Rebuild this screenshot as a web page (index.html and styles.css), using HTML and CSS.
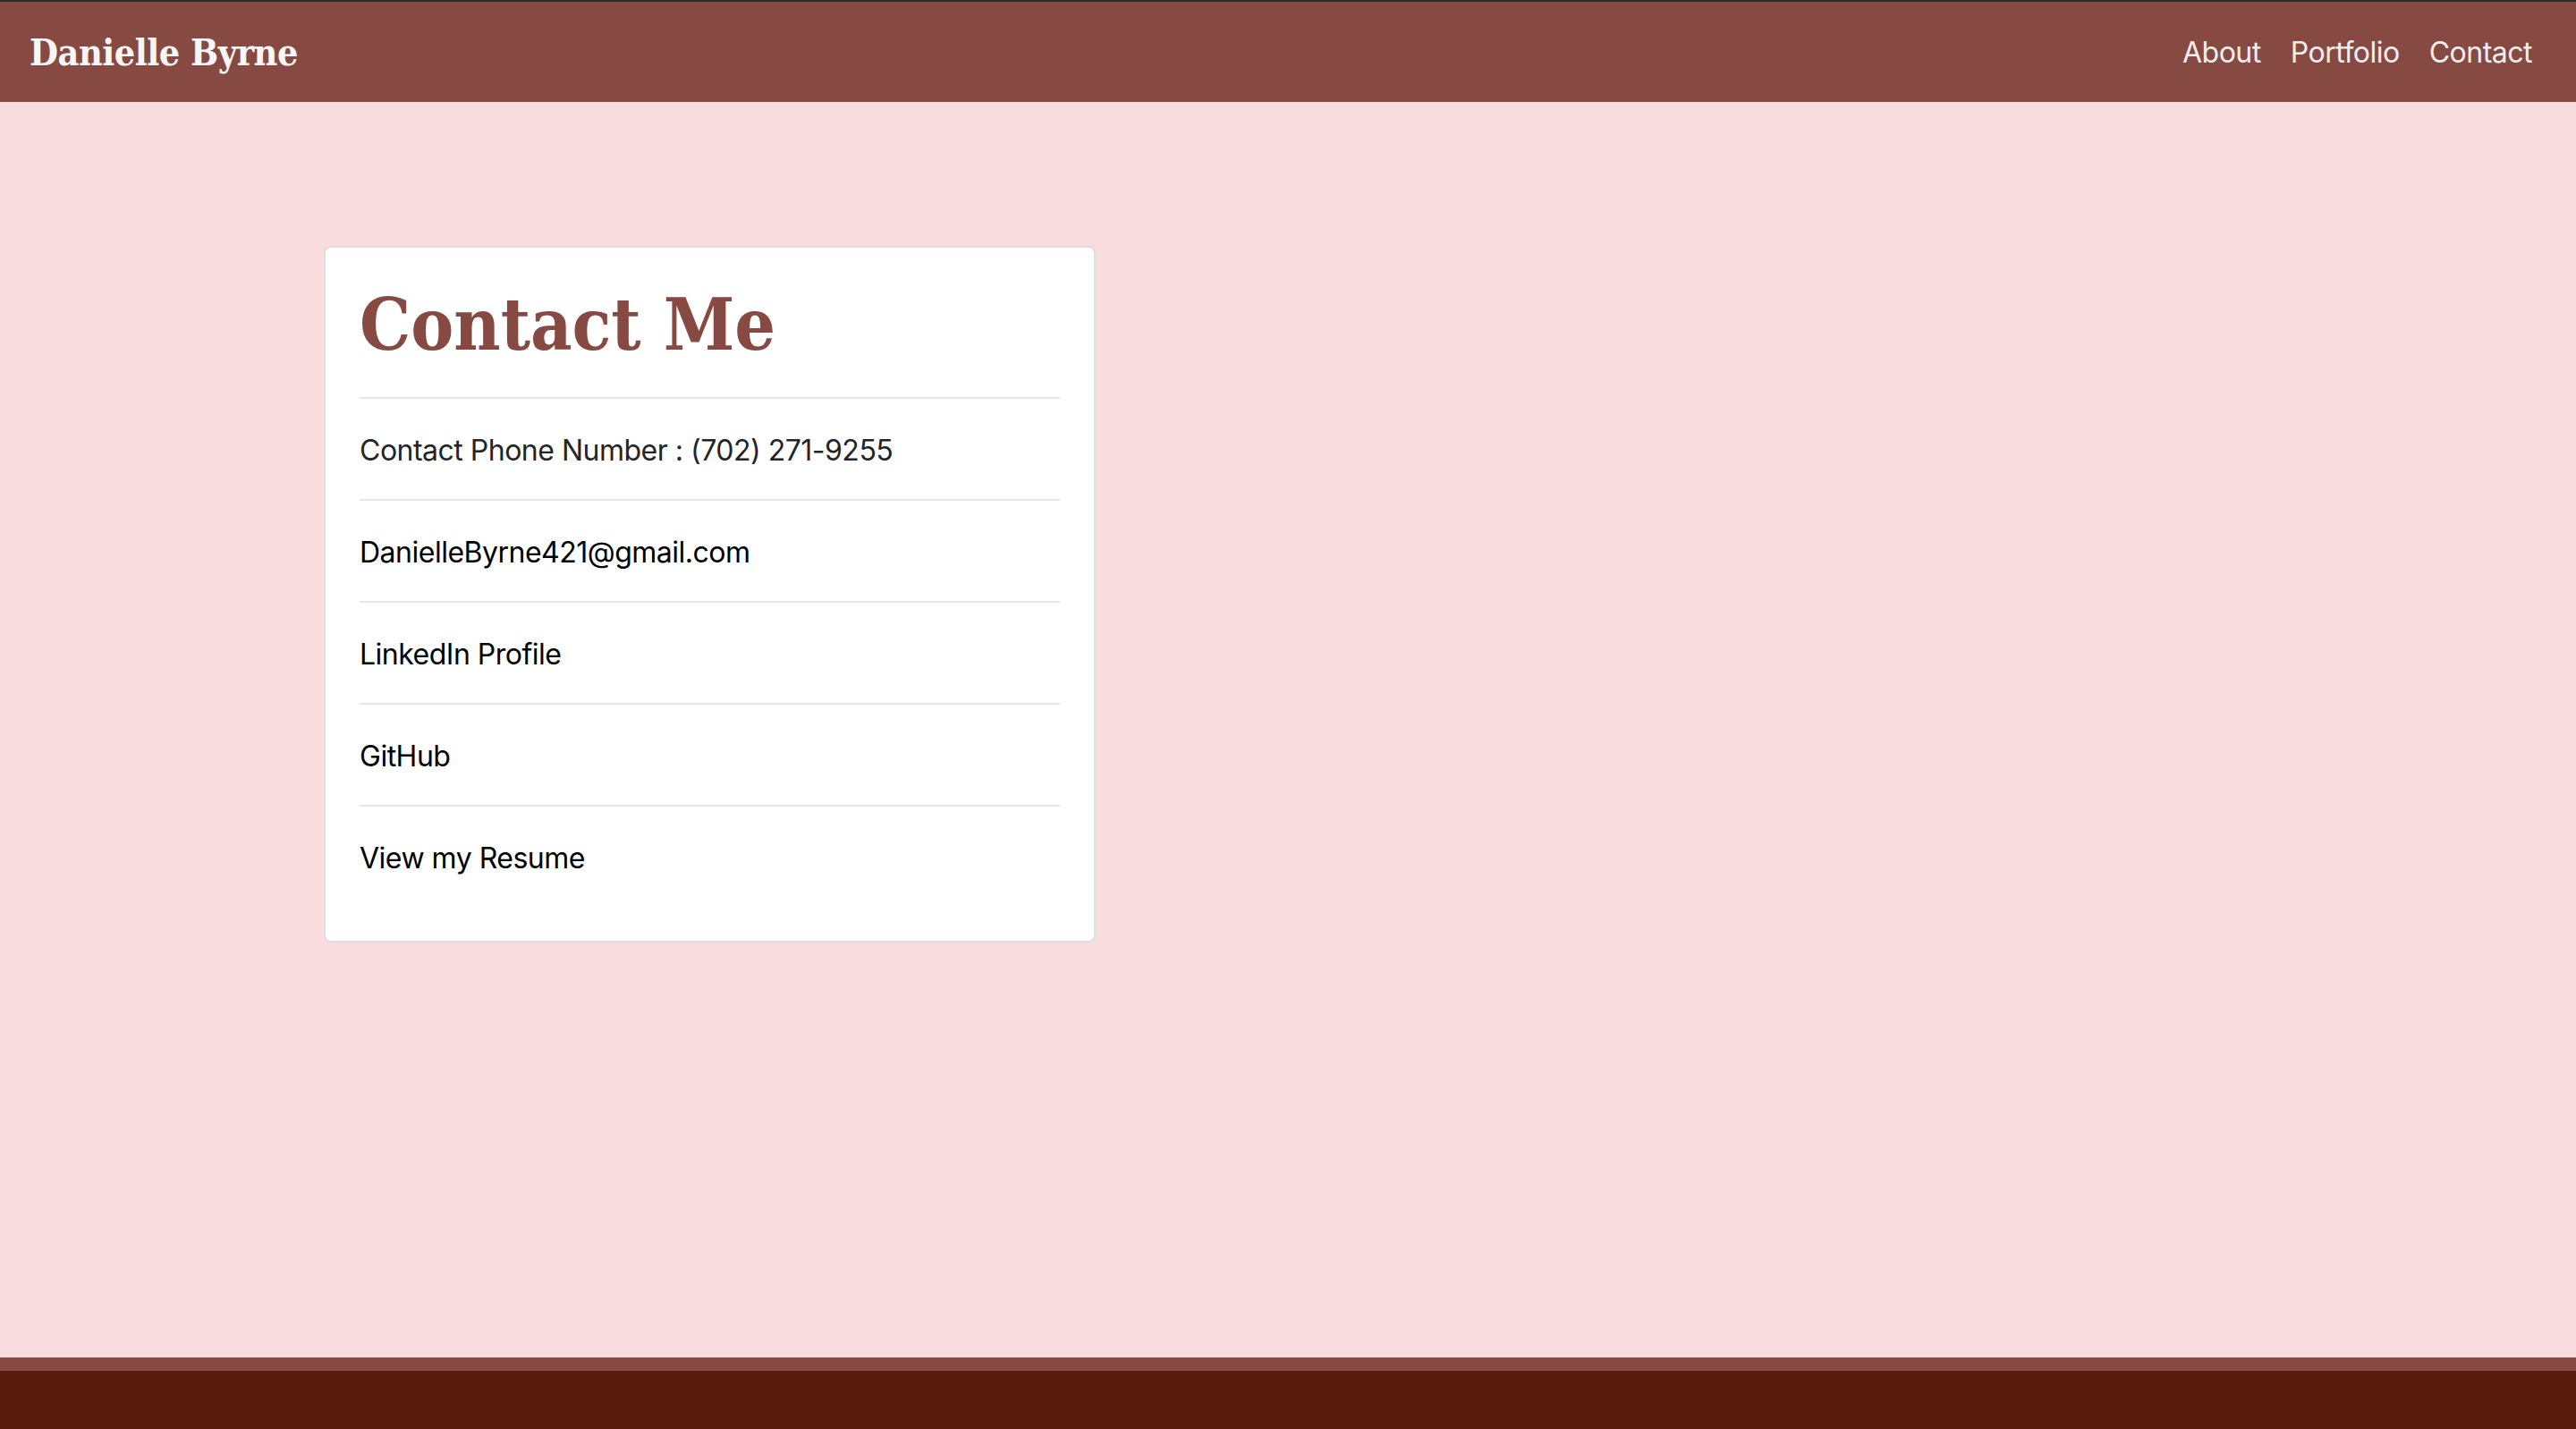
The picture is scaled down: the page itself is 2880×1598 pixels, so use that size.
FILE: index.html
```html
<!DOCTYPE html>
<html lang="en">
<head>
<meta charset="utf-8">
<title>Danielle Byrne - Contact</title>
<link rel="stylesheet" href="styles.css">
</head>
<body>
<div class="page">
  <header class="navbar">
    <a class="brand" href="#">Danielle Byrne</a>
    <nav class="nav">
      <a class="nav-link" href="#">About</a>
      <a class="nav-link" href="#">Portfolio</a>
      <a class="nav-link" href="#">Contact</a>
    </nav>
  </header>
  <main class="main">
    <section class="card">
      <h1 class="card-title">Contact Me</h1>
      <ul class="list">
        <li class="list-item">Contact Phone Number : (702) 271-9255</li>
        <li class="list-item"><a href="#">DanielleByrne421@gmail.com</a></li>
        <li class="list-item"><a href="#">LinkedIn Profile</a></li>
        <li class="list-item"><a href="#">GitHub</a></li>
        <li class="list-item"><a href="#">View my Resume</a></li>
      </ul>
    </section>
  </main>
  <footer class="footer"></footer>
</div>
</body>
</html>
```

FILE: styles.css
```css
html, body {
  margin: 0;
  padding: 0;
  height: 100%;
}
body {
  background: #f9dcdd;
  font-family: "Inter", "Liberation Sans", sans-serif;
  color: #212529;
}
.page {
  display: flex;
  flex-direction: column;
  min-height: 100vh;
}
.navbar {
  display: flex;
  align-items: center;
  justify-content: space-between;
  height: 112px;
  border-top: 2px solid #2b2b2b;
  background: #874a43;
  padding: 0 49px 0 33px;
}
.brand {
  font-family: "DejaVu Serif Condensed", "DejaVu Serif", "Liberation Serif", serif;
  font-weight: bold;
  font-size: 41px;
  color: #f7f5f5;
  text-decoration: none;
  letter-spacing: -0.5px;
  margin-top: 2px;
}
.nav {
  display: flex;
  gap: 33px;
}
.nav-link {
  font-size: 32px;
  letter-spacing: -0.5px;
  color: #f3eded;
  text-decoration: none;
}
.main {
  flex: 1;
  padding: 161px 0 0 362px;
}
.card {
  width: 783px;
  background: #ffffff;
  border: 2px solid #dedede;
  border-radius: 8px;
  padding: 38px;
}
.card-title {
  margin: 0 0 33px 0;
  font-family: "DejaVu Serif Condensed", "DejaVu Serif", "Liberation Serif", serif;
  font-weight: bold;
  font-size: 80px;
  line-height: 96px;
  color: #874a43;
}
.list {
  list-style: none;
  margin: 0;
  padding: 0;
}
.list-item {
  border-top: 2px solid #e6e6e6;
  padding: 34px 0 30px 0;
  font-size: 32px;
  letter-spacing: -0.5px;
  line-height: 48px;
  color: #212529;
}
.list-item a {
  color: #000000;
  text-decoration: none;
}
.footer {
  height: 65px;
  border-top: 15px solid #874a43;
  background: #591b0b;
}
```
